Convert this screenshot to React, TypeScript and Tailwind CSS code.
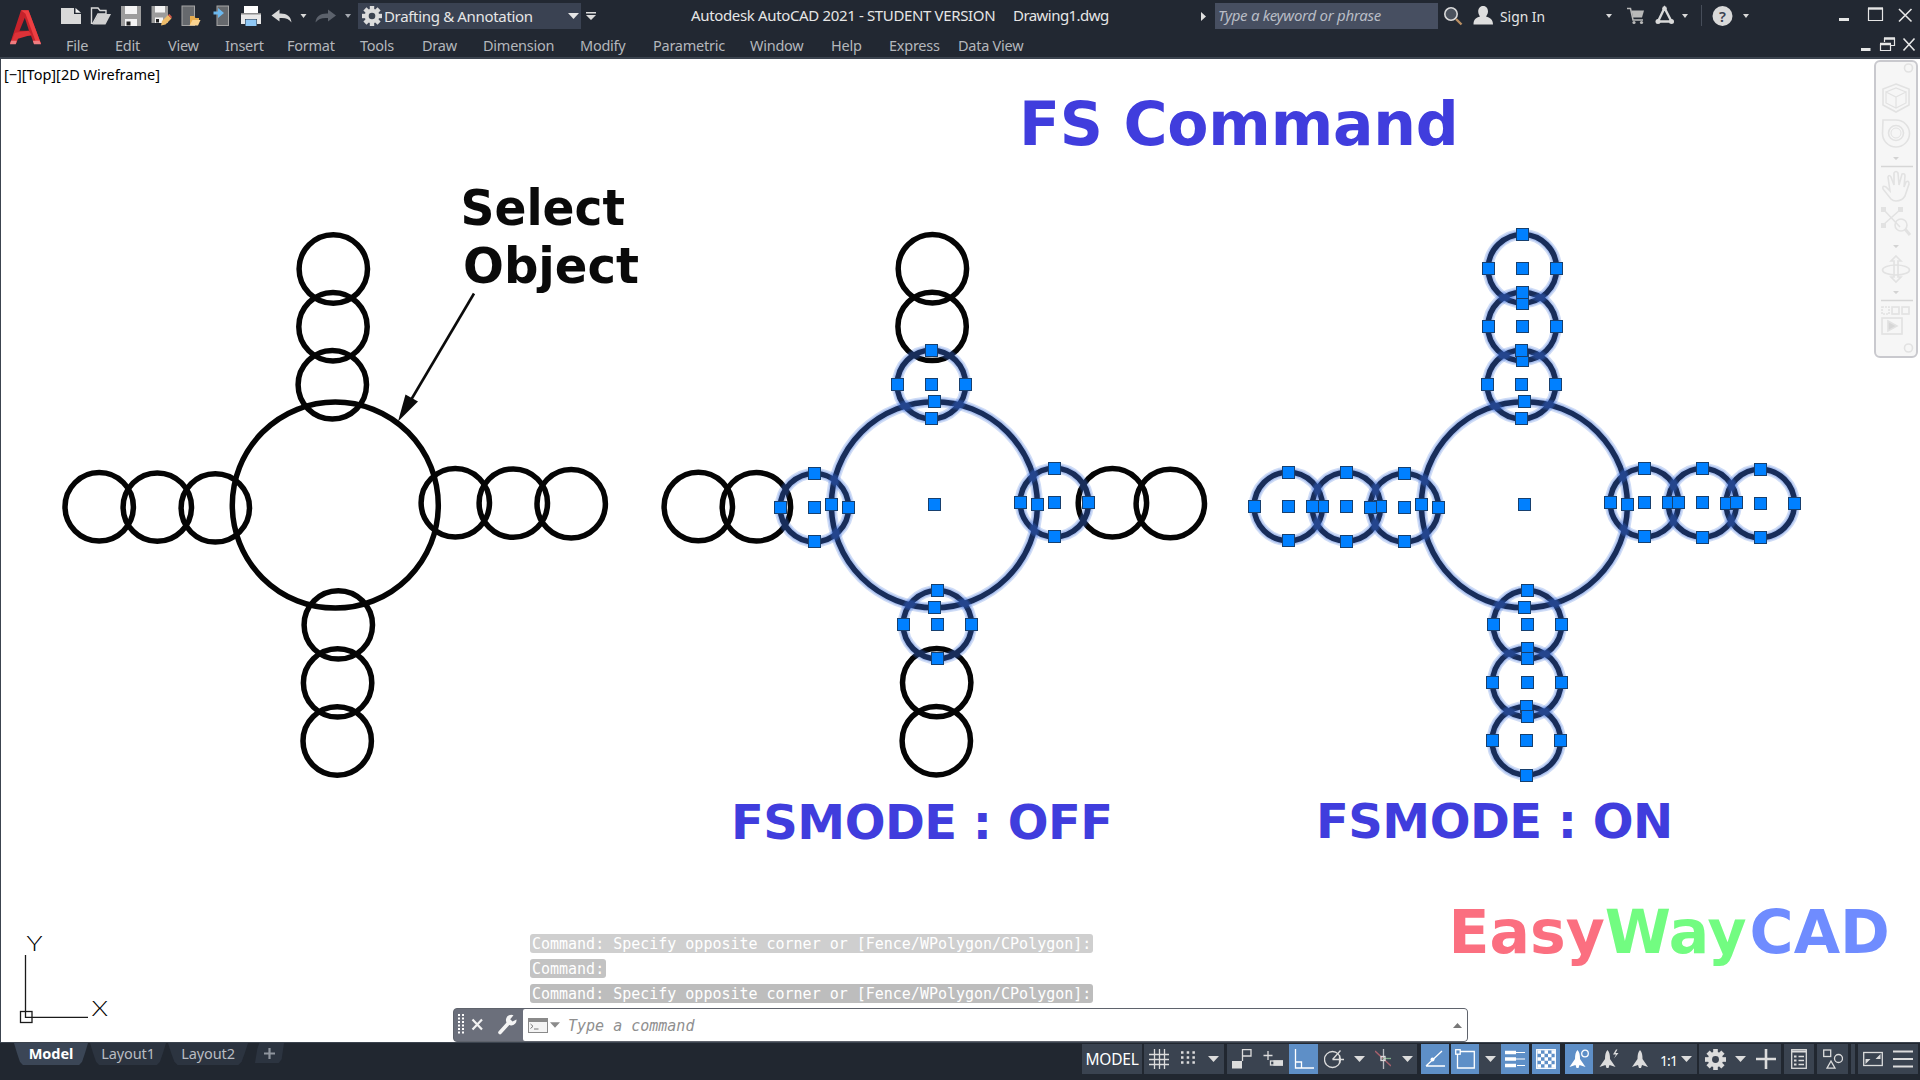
import type { ReactNode } from "react"
import clsx from "clsx"

type Point = [number, number]

const BIG_R = 103
const SMALL_R = 34.2

// centres of the small circles, relative to the big one, outermost first
const arms: Point[][] = [
  [[-2, -236.1], [-2.3, -178.4], [-3, -120.3]],
  [[-236.1, 1.7], [-178, 2], [-120, 2.8]],
  [[235.9, -1.3], [178, -2], [120, -2.3]],
  [[1.9, 235.9], [2.3, 177.8], [3, 119.8]],
]

const menus = [
  { label: "File", width: "w-[49px]" },
  { label: "Edit", width: "w-[53px]" },
  { label: "View", width: "w-[57px]" },
  { label: "Insert", width: "w-[62px]" },
  { label: "Format", width: "w-[73px]" },
  { label: "Tools", width: "w-[62px]" },
  { label: "Draw", width: "w-[61px]" },
  { label: "Dimension", width: "w-[97px]" },
  { label: "Modify", width: "w-[73px]" },
  { label: "Parametric", width: "w-[97px]" },
  { label: "Window", width: "w-[81px]" },
  { label: "Help", width: "w-[58px]" },
  { label: "Express", width: "w-[69px]" },
  { label: "Data View", width: "w-[90px]" },
]

const history = [
  { text: "Command: Specify opposite corner or [Fence/WPolygon/CPolygon]:", bg: "bg-[#cfcfcf]" },
  { text: "Command:", bg: "bg-[#c3c3c3]" },
  { text: "Command: Specify opposite corner or [Fence/WPolygon/CPolygon]:", bg: "bg-[#bdbdbd]" },
]

function Caret({ className = "" }: { className?: string }) {
  return (
    <svg width="11" height="6" viewBox="0 0 11 6" className={clsx("shrink-0", className)}>
      <path d="M0 0h11L5.5 6z" fill="currentColor" />
    </svg>
  )
}

function Grips({ at, r }: { at: Point; r: number }) {
  const [x, y] = at
  const spots: Point[] = [[x, y], [x - r, y], [x + r, y], [x, y - r], [x, y + r]]
  return (
    <>
      {spots.map(([gx, gy], i) => (
        <rect
          key={i}
          x={Math.round(gx - 0.2) - 5.5}
          y={Math.round(gy - 0.4) - 5.5}
          width="12"
          height="12"
          fill="#0080ff"
          stroke="#17406f"
          strokeWidth="1"
        />
      ))}
    </>
  )
}

// selected = how many circles of each arm, counted from the hub, are picked
function Pattern({ cx, cy, selected }: { cx: number; cy: number; selected: number }) {
  const small = arms.flatMap((arm) =>
    arm.map(([dx, dy], i) => ({ at: [cx + dx, cy + dy] as Point, r: SMALL_R, on: i >= 3 - selected }))
  )
  const all = [...small, { at: [cx, cy] as Point, r: BIG_R, on: selected > 0 }]
  const picked = all.filter((c) => c.on)

  return (
    <g fill="none">
      {all.map((c, i) => (
        <circle key={i} cx={c.at[0]} cy={c.at[1]} r={c.r} stroke="#050505" strokeWidth="5.5" />
      ))}
      {picked.map((c, i) => (
        <g key={i} stroke="#366bda">
          <circle cx={c.at[0]} cy={c.at[1]} r={c.r} strokeWidth="11" strokeOpacity="0.24" />
          <circle cx={c.at[0]} cy={c.at[1]} r={c.r} strokeWidth="8" strokeOpacity="0.22" />
        </g>
      ))}
      {picked.map((c, i) => (
        <Grips key={i} at={c.at} r={c.r} />
      ))}
    </g>
  )
}

function Drawing() {
  return (
    <svg width="1920" height="983" viewBox="0 59 1920 983" className="block">
      <Pattern cx={335.3} cy={505.1} selected={0} />
      <Pattern cx={934.4} cy={504.8} selected={1} />
      <Pattern cx={1524.4} cy={504.8} selected={3} />

      <line x1="474" y1="293.5" x2="408" y2="405" stroke="#0b0b0b" strokeWidth="2.6" />
      <path d="M398 421.5L405.5 394.5L418 401.5z" fill="#0b0b0b" />

      <g fontFamily="'DejaVu Sans', sans-serif" fontWeight="700">
        <g fontSize="49" fill="#0a0a0a">
          <text x="460.5" y="225" textLength="164.5" lengthAdjust="spacingAndGlyphs">Select</text>
          <text x="463" y="283" textLength="176" lengthAdjust="spacingAndGlyphs">Object</text>
        </g>
        <g fill="#403ddd">
          <text x="1019" y="145" fontSize="60" letterSpacing="-0.2">FS Command</text>
          <text x="731" y="839" fontSize="48" letterSpacing="-0.5">FSMODE : OFF</text>
          <text x="1316" y="838" fontSize="48" letterSpacing="-0.5">FSMODE : ON</text>
        </g>
        <text x="1448.5" y="953" fontSize="60">
          <tspan fill="#fb6f80">Easy</tspan>
          <tspan fill="#72fc81">Way</tspan>
          <tspan fill="#6f8cff" dx="3">CAD</tspan>
        </text>
      </g>

      {/* UCS icon */}
      <g stroke="#1a1a1a" strokeWidth="1.3" fill="none">
        <path d="M25.5 955V1017.3H88" />
        <rect x="20.5" y="1011.5" width="11.5" height="11" />
      </g>
      <g fontFamily="Lato, sans-serif" fontWeight="300" fontSize="21" fill="#000">
        <text x="26.5" y="951" textLength="16" lengthAdjust="spacingAndGlyphs">Y</text>
        <text x="91.5" y="1016" textLength="16.5" lengthAdjust="spacingAndGlyphs">X</text>
      </g>
    </svg>
  )
}

function NavBar() {
  return (
    <div className="absolute left-[1874px] top-[1px] flex h-[298px] w-[44px] flex-col items-center rounded-md border-2 border-[#c9c9ce] bg-[#f6f6f6]">
      <svg width="40" height="294" viewBox="0 0 40 294" fill="none" stroke="#e2e2e2" strokeWidth="1.6">
        <circle cx="32.5" cy="6" r="4" />
        <circle cx="32.5" cy="286" r="4" />
        {/* view cube */}
        <path d="M20 22L33 27V43L20 50L7 43V27z" />
        <path d="M20 35L30 30V41L20 46L10 41V30zM20 35V46M10 30L20 26L30 30" strokeWidth="1.2" />
        {/* wheel */}
        <path d="M7 58H20A13.5 13.5 0 1 1 6.5 71.5z" />
        <circle cx="20" cy="71" r="7.5" />
        <circle cx="20" cy="71" r="5" strokeWidth="1" />
        {/* pan */}
        <path d="M15 137L7 127Q6 123 10 125L14 129L12 115Q13 112 15 115L18 123V111Q20 108 22 111L23 123L26 112Q29 111 29 114L28 125L30 120Q33 118 33 122L29 134Q26 139 20 139Q17 139 15 137z" />
        {/* zoom extents */}
        <path d="M7 147L24 165M25 147L7 163" />
        <circle cx="25" cy="163" r="6" />
        <path d="M29 167L34 173" strokeWidth="3" />
        <g fill="#e2e2e2" stroke="none">
          <rect x="5" y="145" width="5" height="5" />
          <rect x="22" y="145" width="5" height="5" />
          <rect x="5" y="161" width="5" height="5" />
        </g>
        {/* orbit */}
        <ellipse cx="20" cy="208" rx="13.5" ry="5" />
        <path d="M20 194L25 199H22V215H25L20 220L15 215H18V199H15z" />
        {/* show motion */}
        <rect x="6" y="245" width="7" height="7" strokeDasharray="2 1" />
        <rect x="16" y="245" width="7" height="7" />
        <rect x="26" y="245" width="7" height="7" />
        <rect x="6" y="256" width="20" height="16" />
        <path d="M12 259L21 264L12 269z" fill="#d6d6d6" />
        <path d="M5 104.5H37M5 238.5H37" stroke="#d6d6d6" />
        <path d="M17 95H23L20 98zM17 183H23L20 186zM17 229H23L20 232z" fill="#d3d3d3" stroke="none" />
      </svg>
    </div>
  )
}

function CommandLine() {
  return (
    <div className="absolute bottom-0 left-[453px] w-[1015px]">
      <div className="flex flex-col items-start gap-[6px] pb-[5px] pl-[77px] font-['DejaVu_Sans_Mono',monospace] text-[15px]">
        {history.map((line, i) => (
          <div key={i} className={clsx("h-[19px] whitespace-nowrap rounded-[3px] px-[2px] leading-[21px] tracking-[-0.01px] text-white", line.bg)}>
            {line.text}
          </div>
        ))}
      </div>
      <div className="flex h-[34px] rounded-[4px] border border-[#5f636c] bg-[#6b6f7b]">
        <div className="flex w-[69px] shrink-0 items-center">
          <svg width="69" height="32" viewBox="0 0 69 32" fill="none">
            <g stroke="#fff" strokeWidth="2" strokeDasharray="2 1.5">
              <path d="M5 5V26M9 5V26" />
            </g>
            <path d="M18.5 10.5L28 20.5M28 10.5L18.5 20.5" stroke="#f2f2f2" strokeWidth="2.2" />
            <path d="M46 23.5L55.5 13" stroke="#f4f4f4" strokeWidth="3.6" strokeLinecap="round" />
            <path d="M59.5 6.3A5.3 5.3 0 1 0 62.5 10.5L58.5 12.5L56.2 10.2z" fill="#f4f4f4" />
          </svg>
        </div>
        <div className="flex flex-1 items-center rounded-l-[2px] rounded-r-[3px] bg-white pl-[5px] pr-[5px] text-[#8b8b8b]">
          <svg width="20" height="15" viewBox="0 0 20 15">
            <rect x="0.5" y="0.5" width="19" height="14" fill="#f4f4f4" stroke="#8a8a8a" />
            <rect width="20" height="4" fill="#8a8a8a" />
            <path d="M2.5 6L5 8.300L2.5 10.5M6 11H10.5" fill="none" stroke="#777" />
          </svg>
          <Caret className="ml-[2px] w-[10px]" />
          <span className="ml-[8px] flex-1 pt-[2px] font-['DejaVu_Sans_Mono',monospace] text-[15px] italic text-[#8f8f8f]">
            Type a command
          </span>
          <svg width="9" height="5" viewBox="0 0 9 5">
            <path d="M0 5L4.5 0L9 5z" fill="#777" />
          </svg>
        </div>
      </div>
    </div>
  )
}

function QuickAccess() {
  return (
    <svg width="300" height="32" viewBox="54 0 300 32" className="shrink-0">
      {/* new */}
      <path d="M61 8H74V14H81V24H61z" fill="#d9d9d9" />
      <path d="M75.5 8L81 12.8H75.5z" fill="#f2f2f2" />
      {/* open */}
      <path d="M91.5 24V8H98L100 10.5H106V14H98L92.5 24" fill="none" stroke="#d9d9d9" strokeWidth="1.4" />
      <path d="M98.5 14H111L105.5 24.5H92.5z" fill="#d0d0d0" />
      {/* save */}
      <path d="M121 6H141V26H121z" fill="#9c9c9c" />
      <path d="M125 6H137V14H125zM125 19H137V26H125z" fill="#f4f4f4" />
      <rect x="126.5" y="21.5" width="4" height="4" fill="#222" />
      {/* save as */}
      <path d="M151.5 6H168V23H151.5z" fill="#9c9c9c" />
      <path d="M155 6H165V12.5H155zM155 17.5H163V23H155z" fill="#f4f4f4" />
      <rect x="156" y="19" width="3" height="3.5" fill="#222" />
      <path d="M161 25.5L162 21L168 15L171.5 18.5L165.5 24.5z" fill="#eebc6a" />
      <path d="M168 15L169.5 14L172 17L171 18.5z" fill="#d65b4b" />
      {/* open from and save to mobile */}
      <rect x="182" y="6" width="12.5" height="19.5" fill="#66696d" stroke="#a5a5a5" />
      <path d="M190 25V16H194L195.5 18H199V20" fill="#e9ad4e" />
      <path d="M192.5 20H200.5L198 25.5H189.5z" fill="#fbd490" />
      <rect x="217" y="6" width="11.5" height="19.5" fill="#66696d" stroke="#a5a5a5" />
      <path d="M213.5 11.5H218V8L224 13L218 18V14.5H213.5z" fill="#6cb8ee" />
      {/* plot */}
      <rect x="244" y="6" width="14" height="7" fill="#fff" />
      <path d="M241 13H261V24H257V19H245V24H241z" fill="#e8e8e8" />
      <path d="M241 13H261V14.5H241z" fill="#8c8c8c" />
      <rect x="245.5" y="19.5" width="11" height="6.5" fill="#8fc8f5" />
      {/* undo, redo */}
      <path d="M271.5 15.5L279.5 9.5V13.5C286 13 291 16 291.5 22.5C289 18.5 285 17.5 279.5 18V21.5z" fill="#d9d9d9" />
      <path d="M300.5 14H306.5L303.5 18z" fill="#d9d9d9" />
      <path d="M336 15.5L328 9.5V13.5C321 13 316 16 315.5 22.5C318.5 18.5 322.5 17.5 328 18V21.5z" fill="#5c626c" />
      <path d="M345 14H351L348 18z" fill="#a5a9b0" />
    </svg>
  )
}

function Gear({ size, fill }: { size: number; fill: string }) {
  return (
    <svg width={size} height={size} viewBox="-10 -10 20 20" className="shrink-0">
      {[0, 45, 90, 135].map((a) => (
        <rect key={a} x="-2.2" y="-10" width="4.4" height="20" fill={fill} transform={`rotate(${a})`} />
      ))}
      <circle r="5.3" fill="none" stroke={fill} strokeWidth="4" />
      <circle r="3.3" fill="#3b4350" />
    </svg>
  )
}

function TitleBar() {
  return (
    <div className="flex h-[32px] items-center text-[15px] text-[#e6e6e6]">
      <QuickAccess />
      <div className="ml-[4px] mt-[-1px] flex h-[26px] w-[223px] shrink-0 items-center bg-[#3a4252] pl-[4px] pr-[2px]">
        <Gear size={20} fill="#dcdcdc" />
        <span className="ml-[2px] flex-1 whitespace-nowrap pt-px tracking-[-0.33px]">Drafting &amp; Annotation</span>
        <Caret />
      </div>
      <svg width="10" height="8" viewBox="0 0 10 8" className="ml-[5px] shrink-0">
        <path d="M0 0H10V1.5H0zM0 3H10L5 8z" fill="#dcdcdc" />
      </svg>
      <div className="ml-[95px] mt-[-1px] w-[322px] shrink-0 whitespace-nowrap tracking-[-0.35px]">
        Autodesk AutoCAD 2021 - STUDENT VERSION
      </div>
      <div className="mt-[-1px] w-[188px] shrink-0 whitespace-nowrap tracking-[-0.55px]">Drawing1.dwg</div>
      <svg width="6" height="9" viewBox="0 0 6 9" className="shrink-0">
        <path d="M0 0L5 4.5L0 9z" fill="#e0e0e0" />
      </svg>
      <div className="ml-[8px] mt-[-1px] flex h-[26px] w-[223px] shrink-0 items-center bg-[#474f61] pl-[3px] italic tracking-[-0.27px] text-[#b9bdc6]">
        Type a keyword or phrase
      </div>
      <svg width="308" height="32" viewBox="1438 0 308 32" className="shrink-0">
        <circle cx="1451" cy="14" r="6.2" fill="#4b525d" stroke="#d9d9d9" strokeWidth="1.6" />
        <path d="M1456 19L1461.5 24.5" stroke="#b98f63" strokeWidth="2.4" />
        <path d="M1483 6C1486.500 6 1488 8.500 1488 11.500C1488 14 1486.500 15.500 1486 16.500C1490 17.500 1493 19.500 1493 24.500H1473.500C1473.500 19.500 1476 17.500 1480 16.500C1479.500 15.500 1478.200 14 1478.200 11.500C1478.200 8.500 1480 6 1483 6z" fill="#dedede" />
        <text x="1500" y="22" fontSize="15" fill="#e6e6e6" textLength="45" lengthAdjust="spacingAndGlyphs">Sign In</text>
        <path d="M1606 14H1612L1609 18zM1682 14H1688L1685 18zM1743 14H1749L1746 18z" fill="#d9d9d9" />
        <path d="M1627 8.5H1630.500L1633 20H1643" fill="none" stroke="#b9b9b9" strokeWidth="1.5" />
        <path d="M1631.500 10.500H1644L1642 17.500H1633z" fill="#b9b9b9" />
        <circle cx="1634" cy="22.5" r="1.6" fill="#b9b9b9" />
        <circle cx="1641.5" cy="22.5" r="1.6" fill="#b9b9b9" />
        <path d="M1664.500 8L1658 21.500H1671.500z" fill="none" stroke="#d9d9d9" strokeWidth="2.4" />
        <circle cx="1664.5" cy="8.5" r="2.3" fill="#d9d9d9" />
        <circle cx="1658" cy="21.5" r="2.5" fill="#d9d9d9" />
        <circle cx="1671.5" cy="21.5" r="2.5" fill="#d9d9d9" />
        <path d="M1701.500 5V26" stroke="#464d59" />
        <circle cx="1722.5" cy="16" r="10" fill="#d9d9d9" />
        <text x="1722.5" y="21.5" fontSize="15" fontWeight="600" textAnchor="middle" fill="#3a4150">?</text>
      </svg>
      <svg width="174" height="32" viewBox="1746 0 174 32" className="shrink-0" fill="none" stroke="#e6e6e6">
        <path d="M1746 14H1749L1746 18z" fill="#d9d9d9" stroke="none" />
        <path d="M1839 19.5H1849" strokeWidth="3" />
        <path d="M1868 8.5H1883" strokeWidth="2.4" />
        <path d="M1868.5 8V20.5H1882.5V8" strokeWidth="1.2" />
        <path d="M1899 9L1911.500 21.500M1911.500 9L1899 21.500" strokeWidth="1.6" />
      </svg>
    </div>
  )
}

function MenuBar() {
  return (
    <div className="flex h-[25px] items-center pl-[12px] text-[14.5px] tracking-[-0.25px] text-[#b4b7bc]">
      {menus.map((m) => (
        <div key={m.label} className={clsx("shrink-0 whitespace-nowrap pt-[2px]", m.width)}>
          {m.label}
        </div>
      ))}
      <svg width="66" height="25" viewBox="1854 32 66 25" className="ml-auto shrink-0" fill="none" stroke="#e6e6e6">
        <path d="M1861 49.5H1870.500" strokeWidth="3" />
        <path d="M1884.500 42V38.500H1894.500V45.500H1891" strokeWidth="1.2" />
        <path d="M1884 38.500H1895M1880 44H1891" strokeWidth="2.4" />
        <path d="M1880.500 44V50.500H1890.500V44" strokeWidth="1.2" />
        <path d="M1903.500 38.500L1914.500 50.500M1914.500 38.500L1903.500 50.500" strokeWidth="1.6" />
      </svg>
    </div>
  )
}

function Logo() {
  return (
    <svg width="54" height="57" viewBox="-0.5 -0.7 54 57" className="shrink-0">
      <path d="M9.5 43L20.5 9.5H28L40.5 43H33.5L30.5 35L17 35L15.5 43z" fill="#c6222b" />
      <path d="M20.5 9.5H28L40.5 43H36L25 13z" fill="#ee3f42" />
      <path d="M24.3 17L19 30H28.5z" fill="#222832" />
      <path d="M12 38L9.5 43H15.5L17.5 38L31 34L28 30L14.5 32z" fill="#dd3238" />
      <path d="M10.5 40L9.5 43.5H15.2L16.2 40zM32.3 40L33.5 43.5H40.5L39 40z" fill="#ef7d80" />
    </svg>
  )
}

function Cell({ width, active, plain, children }: { width: string; active?: boolean; plain?: boolean; children?: ReactNode }) {
  return (
    <div
      className={clsx(
        "flex h-[30px] shrink-0 items-center justify-center",
        width,
        active ? "bg-[#5e8fc7] text-white" : "text-[#dcdcdc]",
        !active && !plain && "bg-[#3a4350]"
      )}
    >
      {children}
    </div>
  )
}

function Glyph({ w = 20, children }: { w?: number; children: ReactNode }) {
  return (
    <svg width={w} height="20" viewBox={`0 0 ${w} 20`} fill="none" stroke="currentColor" strokeWidth="1.3" className="shrink-0">
      {children}
    </svg>
  )
}

const scaleFigure = "M10 1C12 3 12.5 6 12.5 10L18 18L12 16L11 19H9L8 16L2 18L7.5 10C7.5 6 8 3 10 1z"

function StatusBar() {
  return (
    <div className="ml-auto flex h-[30px] w-[838px] items-center">
      <Cell width="w-[60px]">
        <span className="pt-[2px] text-[15.5px] tracking-[-0.2px] text-white">MODEL</span>
      </Cell>
      <div className="ml-[2px] flex w-[80px] shrink-0 bg-[#3a4350]">
        <Cell width="w-[29px]">
          <Glyph>
            <path d="M5.5 0V20M10.5 0V20M15.5 0V20M0 5.5H20M0 10.5H20M0 15.5H20" />
          </Glyph>
        </Cell>
        <Cell width="w-[30px]">
          <Glyph w={16}>
            {[2, 7, 12].map((y) => (
              <path key={y} d={`M1 ${y + 1.5}H15`} strokeWidth="2.5" strokeDasharray="2.5 3.2" />
            ))}
          </Glyph>
        </Cell>
        <Cell width="w-[21px]">
          <Caret />
        </Cell>
      </div>
      <div className="ml-[3px] flex w-[190px] shrink-0 bg-[#3a4350]">
        <Cell width="w-[29px]">
          <Glyph>
            <path d="M10.5 12V0.7H19V7H10.5" />
            <rect x="0" y="12" width="10" height="7.5" fill="currentColor" stroke="none" />
          </Glyph>
        </Cell>
        <Cell width="w-[33px]">
          <Glyph>
            <path d="M5 2V11M0.5 6.5H9.5" />
            <rect x="7.5" y="12" width="12" height="4" />
            <rect x="11" y="12" width="8.5" height="4" fill="currentColor" />
          </Glyph>
        </Cell>
        <Cell width="w-[29px]" active>
          <Glyph>
            <path d="M1.5 0V19H20M1.5 13H7.5V19" />
          </Glyph>
        </Cell>
        <Cell width="w-[31px]">
          <Glyph>
            <circle cx="8.5" cy="10.5" r="8" />
            <path d="M8.5 10.5H20M8.5 10.5L16.5 1.5M15.5 6V14" />
          </Glyph>
        </Cell>
        <Cell width="w-[20px]">
          <Caret />
        </Cell>
        <Cell width="w-[28px]">
          <Glyph w={16}>
            <path d="M0 2L16 17" stroke="#a8606c" />
            <path d="M8.5 0V20" stroke="#b9bcc2" />
            <path d="M16 9.5H8" stroke="#7fae8a" />
            <rect x="6" y="7.5" width="4" height="4" />
          </Glyph>
        </Cell>
        <Cell width="w-[20px]">
          <Caret />
        </Cell>
      </div>
      <Cell width="w-[4px]" plain />
      <Cell width="w-[28px]" active>
        <Glyph>
          <path d="M1 17H20M1 17L17 2" />
          <circle cx="7.5" cy="10.5" r="2" fill="currentColor" stroke="none" />
        </Glyph>
      </Cell>
      <Cell width="w-[2px]" plain />
      <Cell width="w-[28px]" active>
        <Glyph>
          <path d="M5 2.5H19.3V19H2.5V5" />
          <rect x="0.7" y="0.7" width="4.5" height="4.5" />
        </Glyph>
      </Cell>
      <Cell width="w-[22px]">
        <Caret />
      </Cell>
      <Cell width="w-[28px]" active>
        <Glyph>
          <path d="M8 3.5H20M10 10H20M12 16.5H20" strokeWidth="1.2" />
          <path d="M0 3.5H11M0 10H11M0 16.5H11" strokeWidth="3.5" />
        </Glyph>
      </Cell>
      <Cell width="w-[3px]" plain />
      <Cell width="w-[28px]" active>
        <Glyph>
          <rect x="0.7" y="0.7" width="18.6" height="18.6" />
          {[3, 6.5, 10, 13.5, 17].map((y, i) => (
            <path key={y} d={i % 2 ? `M5 ${y}H18` : `M1.5 ${y}H19`} strokeWidth="3.3" strokeDasharray="3.5 3.5" />
          ))}
        </Glyph>
      </Cell>
      <Cell width="w-[5px]" plain />
      <Cell width="w-[28px]" active>
        <Glyph>
          <path d={scaleFigure} transform="translate(-1.5 0)" fill="currentColor" stroke="none" />
          <circle cx="16" cy="4.5" r="3.3" />
        </Glyph>
      </Cell>
      <div className="flex w-[104px] shrink-0 items-center bg-[#3a4350] text-[#d9d3d3]">
        <Cell width="w-[32px]">
          <Glyph>
            <path d={scaleFigure} transform="translate(-1.5 0)" fill="currentColor" stroke="none" />
            <path d="M17 0.5L14 5.5H17L15 9.5L19.5 4H16.5L18.5 0.5z" fill="currentColor" stroke="none" />
          </Glyph>
        </Cell>
        <Cell width="w-[29px]">
          <Glyph>
            <path d={scaleFigure} fill="currentColor" stroke="none" />
          </Glyph>
        </Cell>
        <span className="ml-[6px] w-[16px] shrink-0 pt-[2px] text-[14px] tracking-[-0.9px] text-white">1:1</span>
        <Caret className="ml-[5px] text-[#dcdcdc]" />
      </div>
      <div className="ml-[2px] flex w-[52px] shrink-0 items-center gap-[9px] bg-[#3a4350] pl-[6px] text-[#dcdcdc]">
        <div className="flex h-[30px] items-center">
          <Gear size={21} fill="#dcdcdc" />
        </div>
        <Caret />
      </div>
      <Cell width="w-[30px]">
        <Glyph>
          <path d="M10 0V20M0 10H20" strokeWidth="2.6" />
        </Glyph>
      </Cell>
      <div className="ml-[3px] flex shrink-0 gap-[3px]">
        <Cell width="w-[30px]">
          <Glyph w={16}>
            <rect x="0.7" y="0.7" width="14.6" height="18.6" />
            <path d="M1 2.5H15" strokeWidth="2" />
            <path d="M3 7.5H5.5M3 11.5H5.5M3 15.5H5.5" strokeWidth="2.2" />
            <path d="M7.5 7.5H13M7.5 11.5H13M7.5 15.5H13" />
          </Glyph>
        </Cell>
        <Cell width="w-[31px]">
          <Glyph>
            <rect x="0.7" y="1" width="7" height="6.5" />
            <circle cx="15.5" cy="9.5" r="4" />
            <path d="M8 12L12 19.2H4z" />
          </Glyph>
        </Cell>
        <Cell width="w-[4px]" />
        <div className="flex w-[60px] gap-[5px] bg-[#3a4350]">
          <Cell width="w-[30px]">
            <Glyph>
              <rect x="0.7" y="3.5" width="18.6" height="13" />
              <path d="M2.5 15V10H7.5zM17.5 5V10H12.5z" fill="currentColor" stroke="none" />
            </Glyph>
          </Cell>
          <Cell width="w-[20px]">
            <Glyph>
              <path d="M0 2.5H20M0 10H20M0 17.5H20" strokeWidth="2.2" />
            </Glyph>
          </Cell>
        </div>
      </div>
    </div>
  )
}

function Tab({ width, active, children }: { width: string; active?: boolean; children: ReactNode }) {
  return (
    <div
      className={clsx(
        "flex h-[22px] items-center justify-center text-[14.5px] tracking-[-0.1px] [clip-path:polygon(0_0,100%_0,96%_45%,92%_85%,88%_100%,12%_100%,8%_85%,4%_45%)]",
        active ? "bg-[#3b4656] font-bold text-white" : "bg-[#2c3440] text-[#b9bcc2]",
        width
      )}
    >
      {children}
    </div>
  )
}

export default function App() {
  return (
    <div className="flex h-[1080px] w-[1920px] flex-col overflow-hidden bg-[#222832] font-['Noto_Sans',sans-serif]">
      <header className="flex h-[59px] shrink-0 border-b-2 border-[#3c444f]">
        <Logo />
        <div className="flex-1">
          <TitleBar />
          <MenuBar />
        </div>
      </header>

      <main className="relative h-[983px] shrink-0 bg-white">
        <Drawing />
        <div className="absolute left-0 top-0 h-full w-px bg-[#3c444f]" />
        <div className="absolute left-[4px] top-[5px] text-[14.5px] leading-[20px] text-black">
          [−][Top][2D Wireframe]
        </div>
        <NavBar />
        <CommandLine />
      </main>

      <footer className="flex h-[38px] shrink-0 items-start border-t border-[#3c444f] bg-[#212730]">
        <div className="flex gap-[2px] pl-[14px]">
          <Tab width="w-[74px]" active>Model</Tab>
          <Tab width="w-[76px]">Layout1</Tab>
          <Tab width="w-[80px]">Layout2</Tab>
          <div className="ml-[5px] flex h-[20px] w-[29px] items-center justify-center bg-[#2c3440] [clip-path:polygon(15%_0,100%_0,92%_80%,82%_100%,0_100%,8%_30%)]">
            <svg width="11" height="11" viewBox="0 0 11 11">
              <path d="M5.5 0V11M0 5.5H11" stroke="#8f959e" strokeWidth="2.2" />
            </svg>
          </div>
        </div>
        <div className="ml-auto pt-[1px]">
          <StatusBar />
        </div>
      </footer>
    </div>
  )
}
